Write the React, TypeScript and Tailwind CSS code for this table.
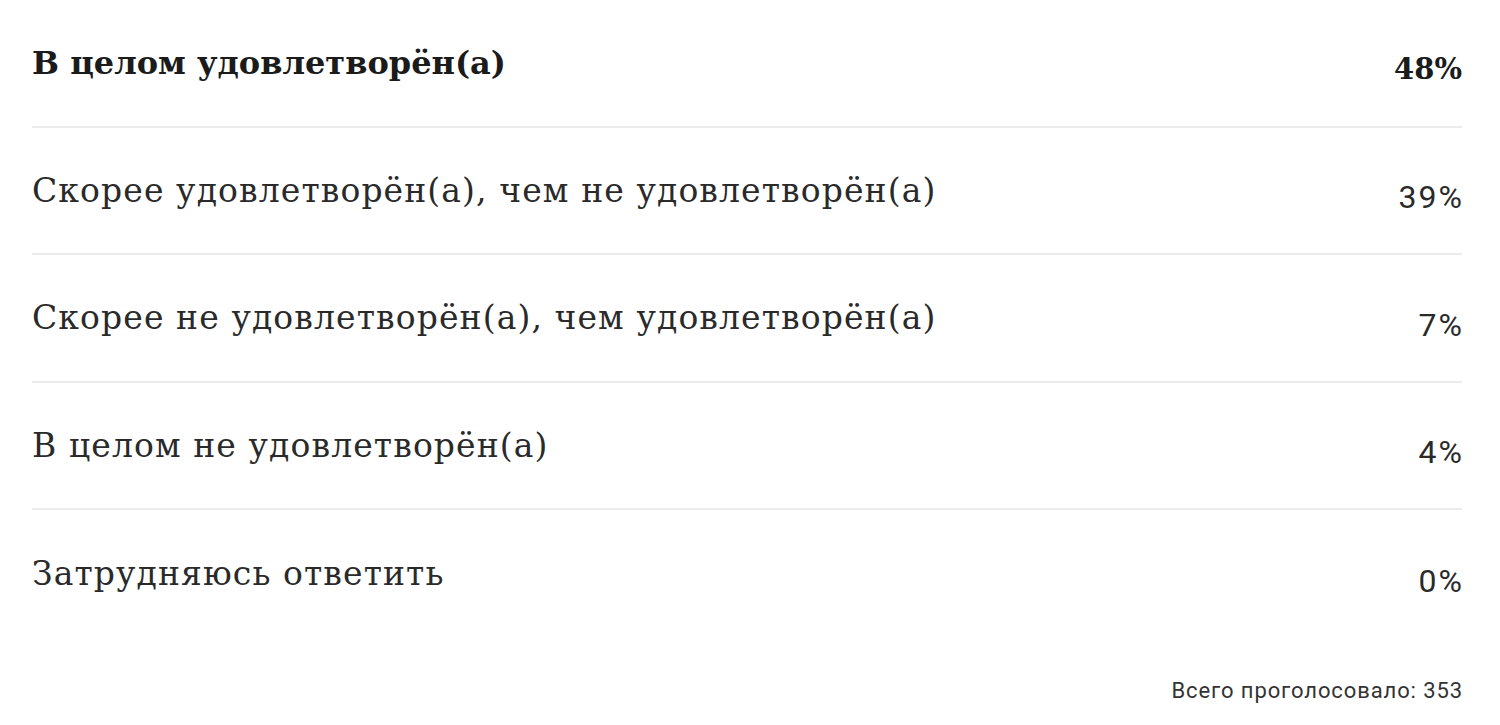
const rows = [
  { label: "В целом удовлетворён(а)", value: "48%", top: true },
  { label: "Скорее удовлетворён(а), чем не удовлетворён(а)", value: "39%" },
  { label: "Скорее не удовлетворён(а), чем удовлетворён(а)", value: "7%" },
  { label: "В целом не удовлетворён(а)", value: "4%" },
  { label: "Затрудняюсь ответить", value: "0%" },
]

export default function App() {
  return (
    <div className="w-[1500px] h-[725px] bg-white pl-[32px] pr-[38px] overflow-hidden">
      {rows.map((row, i) => (
        <div
          key={i}
          className={
            "flex items-center justify-between h-[127.5px] " +
            (i < rows.length - 1 ? "border-b-2 border-[#ebebeb]" : "")
          }
        >
          <span
            className={
              "font-['DejaVu_Serif',serif] " +
              (row.top
                ? "text-[32px] font-bold text-[#1b1b1b]"
                : "text-[33px] tracking-[1.1px] text-[#2a2a2a]")
            }
          >
            {row.label}
          </span>
          <span
            className={
              "mt-[14px] " +
              (row.top
                ? "font-['DejaVu_Serif',serif] text-[29px] font-bold text-[#1b1b1b]"
                : "font-['Roboto',sans-serif] text-[32px] tracking-[2px] -mr-[2px] text-[#2a2a2a]")
            }
          >
            {row.value}
          </span>
        </div>
      ))}
      <div className="flex justify-end pt-[36px]">
        <span className="font-['Roboto',sans-serif] text-[22px] tracking-[0.9px] -mr-[1px] text-[#333]">
          Всего проголосовало: 353
        </span>
      </div>
    </div>
  )
}
